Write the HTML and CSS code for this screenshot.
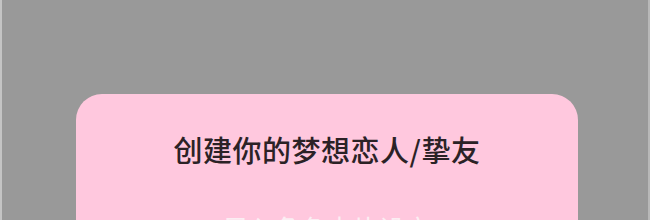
FILE: index.html
```html
<!DOCTYPE html>
<html lang="zh-CN">

<head>
    <meta charset="UTF-8">
    <meta name="viewport" content="width=device-width, initial-scale=1.0">
    <title>创建角色</title>
    <link rel="stylesheet" href="styles.css">
</head>

<body>
    <div class="screen">
        <div class="dialog">
            <h2 class="dialog-title">创建你的梦想恋人/挚友</h2>
            <p class="dialog-sub">导入角色卡片设定</p>
        </div>
    </div>
</body>

</html>
```

FILE: styles.css
```css
html,
body {
    margin: 0;
    height: 100%;
    overflow: hidden;
}

body {
    font-family: "Noto Sans CJK SC", "Noto Sans", sans-serif;
    background: #999999;
}

.screen {
    height: 100%;
    padding: 94px 0 0 74px;
    box-sizing: border-box;
    border-left: 2px solid #c4c4c4;
    border-right: 2px solid #b8b8b8;
}

.dialog {
    width: 502px;
    height: 300px;
    background: #ffc8de;
    border-radius: 26px;
    padding-top: 34px;
    box-sizing: border-box;
    text-align: center;
}

.dialog-title {
    margin: 0;
    font-size: 29px;
    font-weight: 500;
    line-height: 42px;
    letter-spacing: 0.5px;
    color: #2b2226;
}

.dialog-sub {
    margin: 40px 0 0;
    font-size: 26px;
    line-height: 36px;
    color: #fbeef3;
}
```
